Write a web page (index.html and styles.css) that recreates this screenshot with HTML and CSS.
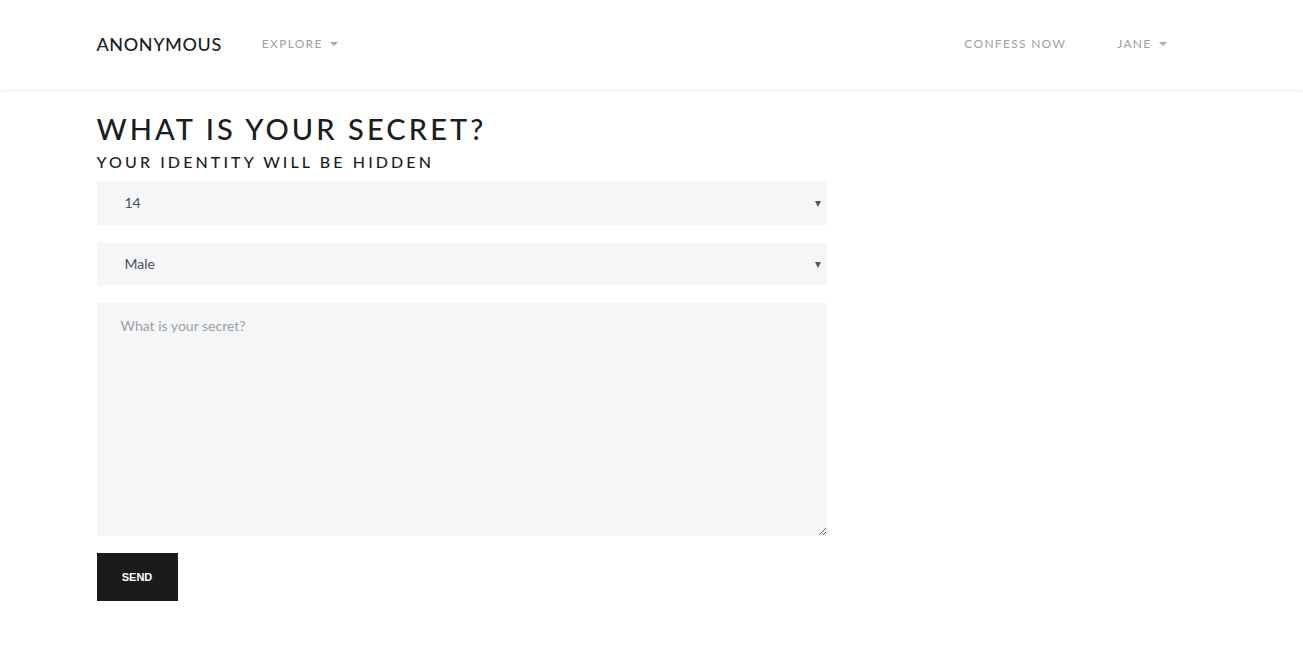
FILE: index.html
```html
<!DOCTYPE html>
<html>
<head>
<meta charset="utf-8">
<link rel="stylesheet" href="styles.css">
</head>
<body>
<nav class="navbar">
  <div class="container nav-inner">
    <div class="nav-left">
      <a class="brand" href="#">ANONYMOUS</a>
      <a class="nav-link" href="#">EXPLORE <span class="caret"></span></a>
    </div>
    <div class="nav-right">
      <a class="nav-link" href="#">CONFESS NOW</a>
      <a class="nav-link" href="#">JANE <span class="caret"></span></a>
    </div>
  </div>
</nav>
<main class="container">
  <h1 class="title">WHAT IS YOUR SECRET?</h1>
  <h2 class="subtitle">YOUR IDENTITY WILL BE HIDDEN</h2>
  <form class="form">
    <div class="select-wrap">
      <select class="field select"><option>14</option></select>
      <span class="arrow"></span>
    </div>
    <div class="select-wrap">
      <select class="field select"><option>Male</option></select>
      <span class="arrow"></span>
    </div>
    <textarea class="field textarea" placeholder="What is your secret?"></textarea>
    <div><button type="button" class="btn">SEND</button></div>
  </form>
</main>
</body>
</html>
```
FILE: styles.css
```css
* { box-sizing: border-box; }
body {
  margin: 0;
  font-family: Lato, "Open Sans", sans-serif;
  background: #fff;
  color: #212529;
}
.container {
  width: 1140px;
  margin: 0 auto;
  padding: 0 15px;
}
.navbar {
  height: 89px;
  background: #fff;
  box-shadow: 0 1px 6px rgba(0,0,0,0.08);
  position: relative;
}
.nav-inner {
  height: 89px;
  padding-bottom: 2px;
  display: flex;
  align-items: center;
  justify-content: space-between;
}
.nav-left, .nav-right {
  display: flex;
  align-items: center;
}
.nav-right { gap: 51px; margin-right: 40px; }
.brand {
  font-size: 18px;
  letter-spacing: 0.6px;
  color: #1b1e21;
  text-decoration: none;
  margin-right: 40px;
  font-weight: 500;
}
.nav-link {
  font-size: 12px;
  letter-spacing: 1.3px;
  color: #a0a0a0;
  text-decoration: none;
  display: flex;
  align-items: center;
}
.caret {
  display: inline-block;
  width: 0; height: 0;
  border-left: 4px solid transparent;
  border-right: 4px solid transparent;
  border-top: 4px solid #a8a8a8;
  margin-left: 7px;
}
.title {
  margin: 23px 0 0;
  font-size: 29px;
  font-weight: 500;
  letter-spacing: 3.1px;
  line-height: 1.2;
  color: #1b1e21;
}
.subtitle {
  margin: 5px 0 0;
  font-size: 16px;
  font-weight: 500;
  letter-spacing: 3.1px;
  line-height: 1.2;
  color: #1b1e21;
}
.form {
  width: 730px;
  margin-top: 10px;
  display: flex;
  flex-direction: column;
  gap: 17px;
}
.select-wrap { position: relative; }
.field {
  width: 100%;
  background: #f5f6f8;
  border: none;
  border-radius: 0;
  font-family: Lato, sans-serif;
  font-size: 14px;
  color: #495057;
  outline: none;
}
.select {
  height: 44px;
  appearance: none;
  -webkit-appearance: none;
  padding: 0 28px;
  display: block;
}
.arrow {
  position: absolute;
  right: 6px;
  top: 20px;
  width: 0; height: 0;
  border-left: 3px solid transparent;
  border-right: 3px solid transparent;
  border-top: 6px solid #555;
}
.textarea {
  height: 233px;
  padding: 14px 24px;
  display: block;
  resize: vertical;
}
.textarea::placeholder { color: #9aa0a6; }
.btn {
  width: 81px;
  height: 48px;
  background: #1b1b1b;
  color: #fff;
  border: none;
  border-radius: 0;
  font-family: "Liberation Sans", Arial, sans-serif;
  font-size: 11px;
  font-weight: 700;
  cursor: pointer;
}
```
